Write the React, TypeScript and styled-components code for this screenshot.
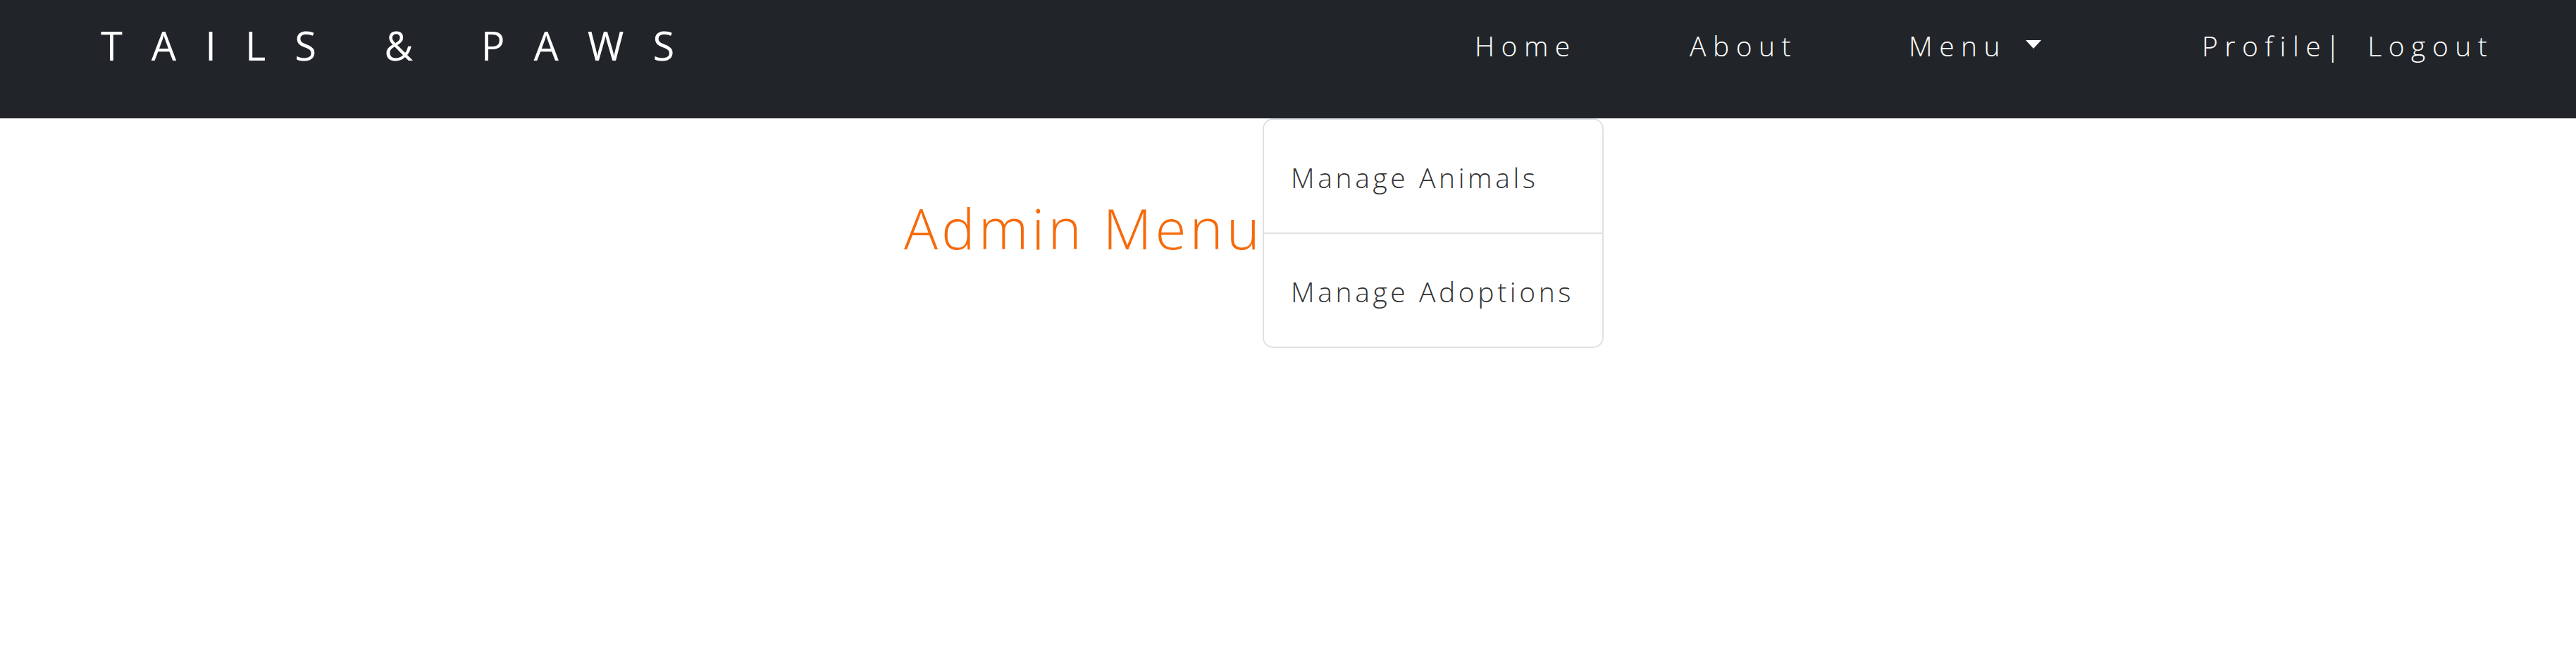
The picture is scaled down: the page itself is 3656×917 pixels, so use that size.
import React from "react";
import styled, { createGlobalStyle } from "styled-components";

const GlobalStyle = createGlobalStyle`
  html, body {
    margin: 0;
    padding: 0;
    background: #ffffff;
  }
  body {
    font-family: "Open Sans", "Segoe UI", "Noto Sans", sans-serif;
    font-weight: 300;
    color: #212529;
  }
  * { box-sizing: border-box; }
`;

const Page = styled.div`
  position: relative;
  min-height: 100vh;
  background: #ffffff;
`;

const Navbar = styled.nav`
  height: 168px;
  background: #212529;
  display: grid;
  grid-template-columns: 1950px 305px 311px 416px auto;
  align-items: center;
  padding: 0 0 38px 143px;
`;

const Brand = styled.a`
  font-family: "Open Sans", sans-serif;
  font-weight: 400;
  font-size: 56px;
  line-height: 1.2;
  letter-spacing: 41px;
  color: #ffffff;
  text-decoration: none;
  white-space: pre;
`;

const NavLink = styled.a`
  font-size: 39px;
  line-height: 1.2;
  letter-spacing: 9.5px;
  color: #ffffff;
  text-decoration: none;
  white-space: pre;
  display: inline-flex;
  align-items: center;
  justify-self: start;
`;

const Caret = styled.span`
  width: 0;
  height: 0;
  margin-left: 27px;
  margin-top: -4px;
  border-top: 12px solid #ffffff;
  border-left: 11.5px solid transparent;
  border-right: 11.5px solid transparent;
`;

const UserNav = styled.div`
  display: flex;
  align-items: center;
`;

const Separator = styled.span`
  font-size: 39px;
  line-height: 1.2;
  color: #ffffff;
  margin: 0 39px 0 -3px;
`;

const Main = styled.main`
  padding: 107px 0 0 1283px;
`;

const Title = styled.h1`
  margin: 0;
  font-weight: 300;
  font-size: 80px;
  line-height: 1.2;
  letter-spacing: 5px;
  color: #f66a0a;
`;

const Dropdown = styled.ul`
  position: absolute;
  top: 168px;
  left: 1792px;
  width: 484px;
  margin: 0;
  padding: 0;
  list-style: none;
  background: #ffffff;
  border: 2px solid #dee2e6;
  border-radius: 15px;
  overflow: hidden;
`;

const DropdownItem = styled.li<{ $divided?: boolean }>`
  height: ${(p) => (p.$divided ? "162px" : "160px")};
  display: flex;
  align-items: center;
  padding: 4px 0 0 38px;
  border-top: ${(p) => (p.$divided ? "2px solid #dee2e6" : "none")};
  font-size: 39px;
  line-height: 1.2;
  letter-spacing: 4.6px;
  color: #333333;
  white-space: pre;
`;

export default function App() {
  return (
    <Page>
      <GlobalStyle />
      <Navbar>
        <Brand href="#">TAILS &amp; PAWS</Brand>
        <NavLink href="#">Home</NavLink>
        <NavLink href="#">About</NavLink>
        <NavLink href="#">
          Menu
          <Caret />
        </NavLink>
        <UserNav>
          <NavLink href="#">Profile</NavLink>
          <Separator>|</Separator>
          <NavLink href="#">Logout</NavLink>
        </UserNav>
      </Navbar>
      <Main>
        <Title>Admin Menu</Title>
      </Main>
      <Dropdown>
        <DropdownItem>Manage Animals</DropdownItem>
        <DropdownItem $divided>Manage Adoptions</DropdownItem>
      </Dropdown>
    </Page>
  );
}
